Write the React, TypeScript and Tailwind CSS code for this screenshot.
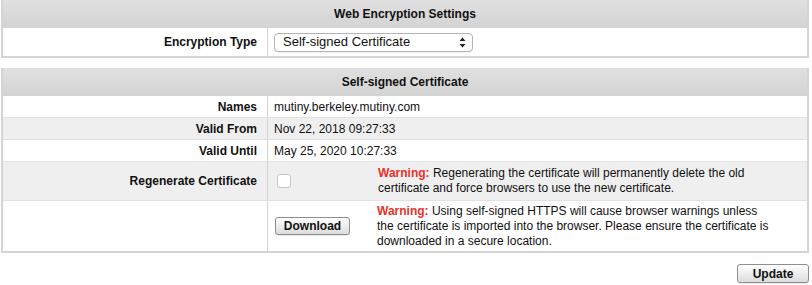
import React from "react";

const font = { fontFamily: '"Liberation Sans", Arial, sans-serif' };

function SectionHeader({ title }: { title: string }) {
  return (
    <div className="flex h-[28px] items-center justify-center border-b border-[#d2d2d2] bg-gradient-to-b from-[#e0e0e0] to-[#d4d4d4] text-[12px] font-bold text-[#111]">
      {title}
    </div>
  );
}

function Row({
  label,
  shaded,
  height,
  last,
  children,
}: {
  label: string;
  shaded?: boolean;
  height: string;
  last?: boolean;
  children?: React.ReactNode;
}) {
  return (
    <div
      className={[
        "flex",
        height,
        shaded ? "bg-[#efefef]" : "bg-white",
        last ? "" : "border-b border-[#e2e2e2]",
      ].join(" ")}
    >
      <div className="flex w-[265px] shrink-0 items-center justify-end border-r border-[#d2d2d2] pr-[10px] text-[12px] font-bold text-[#111]">
        {label}
      </div>
      <div className="flex min-w-0 flex-1 items-center pl-[6px] text-[12px] text-[#111]">
        {children}
      </div>
    </div>
  );
}

function Button({ label, className }: { label: string; className?: string }) {
  return (
    <button
      type="button"
      className={[
        "flex items-center justify-center rounded-[3px] border border-[#8e8e8e] bg-gradient-to-b from-[#ffffff] to-[#dcdcdc] text-[12px] font-bold text-[#111] shadow-[0_1px_0_rgba(0,0,0,0.08)]",
        className,
      ]
        .filter(Boolean)
        .join(" ")}
    >
      {label}
    </button>
  );
}

function Warning({ text, className }: { text: string; className?: string }) {
  return (
    <p className={["w-[400px] text-[12px] leading-[15px] text-[#111]", className].filter(Boolean).join(" ")}>
      <span className="font-bold text-[#e8312a]">Warning:</span> {text}
    </p>
  );
}

export default function App() {
  return (
    <div className="h-[285px] w-[812px] bg-white" style={font}>
      {/* Web encryption settings */}
      <div className="ml-[1px] w-[808px] border-x-2 border-b-2 border-[#d4d4d4]">
        <SectionHeader title="Web Encryption Settings" />
        <Row label="Encryption Type" height="h-[28px]" last>
          <div className="flex h-[19px] w-[199px] items-center justify-between rounded-[4px] border border-[#b4b4b4] bg-white pl-[8px] pr-[6px] shadow-[0_1px_1px_rgba(0,0,0,0.06)]">
            <span className="text-[13px] text-[#111]">Self-signed Certificate</span>
            <svg width="7" height="11" viewBox="0 0 7 11" aria-hidden="true">
              <path d="M3.5 0.5 L6.5 4 H0.5 Z" fill="#222" />
              <path d="M3.5 10.5 L6.5 7 H0.5 Z" fill="#222" />
            </svg>
          </div>
        </Row>
      </div>

      {/* Self-signed certificate */}
      <div className="ml-[1px] mt-[10px] w-[808px] border-x-2 border-b-2 border-[#d4d4d4]">
        <SectionHeader title="Self-signed Certificate" />
        <Row label="Names" height="h-[22px]">
          mutiny.berkeley.mutiny.com
        </Row>
        <Row label="Valid From" height="h-[22px]" shaded>
          Nov 22, 2018 09:27:33
        </Row>
        <Row label="Valid Until" height="h-[22px]">
          May 25, 2020 10:27:33
        </Row>
        <Row label="Regenerate Certificate" height="h-[39px]" shaded>
          <div className="flex items-center">
            <span className="ml-[3px] block h-[14px] w-[14px] rounded-[3px] border border-[#c4c4c4] bg-white" />
            <Warning
              className="ml-[87px]"
              text="Regenerating the certificate will permanently delete the old certificate and force browsers to use the new certificate."
            />
          </div>
        </Row>
        <Row label="" height="h-[50px]" last>
          <div className="flex items-center">
            <Button label="Download" className="ml-[1px] h-[18px] w-[75px]" />
            <Warning
              className="ml-[27px]"
              text="Using self-signed HTTPS will cause browser warnings unless the certificate is imported into the browser. Please ensure the certificate is downloaded in a secure location."
            />
          </div>
        </Row>
      </div>

      <div className="mt-[11px] flex justify-end pr-[3px]">
        <Button label="Update" className="h-[19px] w-[72px]" />
      </div>
    </div>
  );
}
